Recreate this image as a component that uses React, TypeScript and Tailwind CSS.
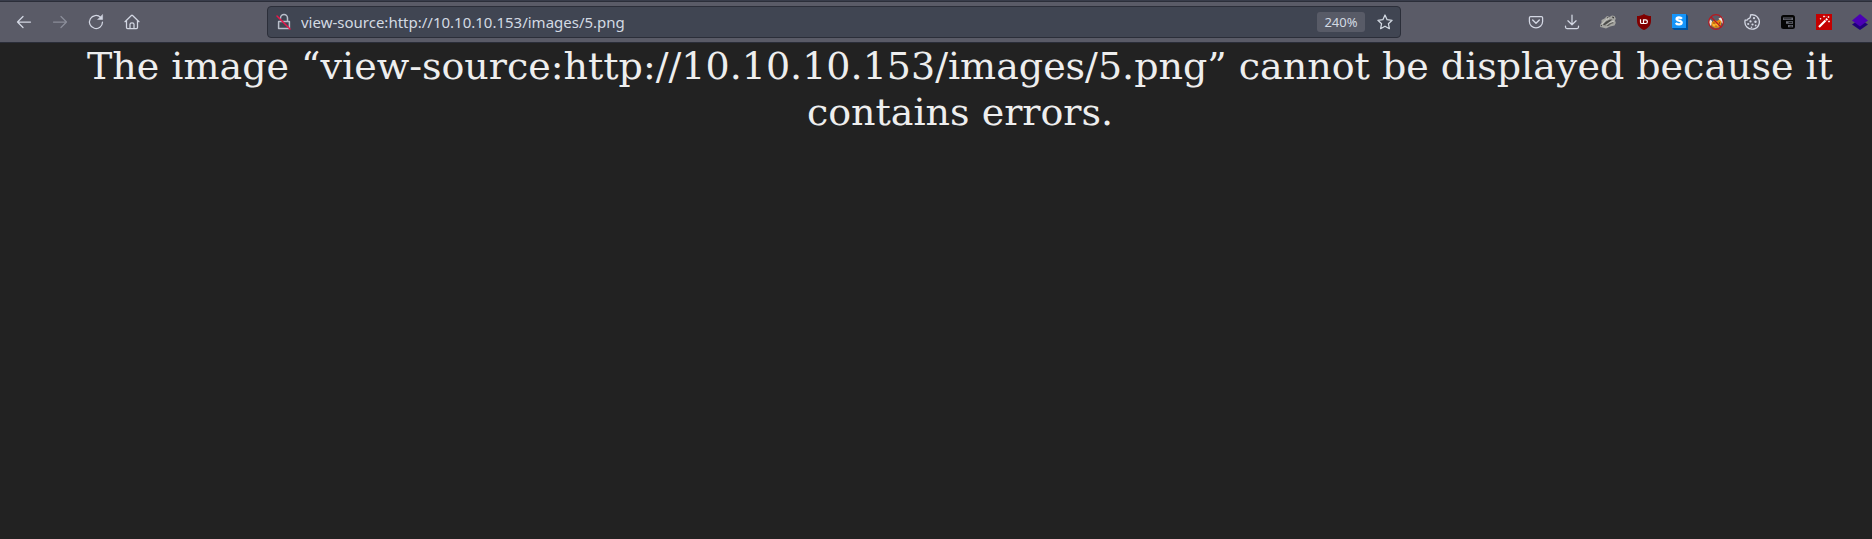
import type { ReactNode } from 'react';

function ToolButton({ label, disabled, children }: { label: string; disabled?: boolean; children: ReactNode }) {
  return (
    <button type="button" aria-label={label} disabled={disabled} className="flex size-4 shrink-0 items-center justify-center text-[#d3d7e3] disabled:opacity-40">
      {children}
    </button>
  );
}

function Line({ children }: { children: ReactNode }) {
  return (
    <svg viewBox="0 0 16 16" className="size-4 shrink-0 overflow-visible" fill="none" stroke="currentColor" strokeWidth="1.25" strokeLinecap="round" strokeLinejoin="round" aria-hidden="true">
      {children}
    </svg>
  );
}

function Navigation() {
  return (
    <nav aria-label="Navigation" className="flex gap-5">
      <ToolButton label="Back">
        <Line><path d="M14.5 8H1.5M7 2.500L1.500 8L7 13.500" /></Line>
      </ToolButton>
      <ToolButton label="Forward" disabled>
        <Line><path d="M1.500 8H14.500M9 2.500L14.500 8L9 13.500" /></Line>
      </ToolButton>
      <ToolButton label="Reload">
        <Line>
          <path d="M12.600 3.400A6.500 6.500 0 1 0 14.500 8" />
          <path d="M14.600 0.800V5.500H9.900Z" fill="currentColor" strokeWidth="0.5" />
        </Line>
      </ToolButton>
      <ToolButton label="Home">
        <Line>
          <path d="M1 7.700L7.400 1.500Q8 1 8.600 1.500L15 7.700M2.500 6.600V13.500Q2.500 14.600 3.600 14.600H12.400Q13.500 14.600 13.500 13.500V6.600" />
          <path d="M6 14.400V10.300Q6 8.800 8 8.800T10 10.300V14.400" />
        </Line>
      </ToolButton>
    </nav>
  );
}

function AddressBar() {
  return (
    <div className="mr-[127px] ml-[127px] flex h-8 min-w-0 flex-1 items-center rounded border border-[#2b2e39] bg-[#404552] pr-[7px] pl-2 text-[#d3dae3]">
      <button type="button" aria-label="Connection is not secure" className="shrink-0 text-[#b9bfcb]">
        <Line>
          <path d="M4.500 4.500V4A3.500 3.500 0 0 1 11.500 4V7.500M2.600 7.500H13.400V14.500H2.600Z" strokeWidth="1.5" />
          <path d="M1 2L14 15" stroke="#e8174b" strokeWidth="1.500" />
        </Line>
      </button>
      <input aria-label="Address" defaultValue="view-source:http://10.10.10.153/images/5.png" className="ml-[9px] min-w-0 flex-1 bg-transparent font-['Noto_Sans',sans-serif] text-[15px] leading-5 outline-none" />
      <button type="button" aria-label="Reset zoom level" className="h-5 w-12 shrink-0 rounded-[3px] bg-[#585b67] text-center font-['Noto_Sans',sans-serif] text-[13px] leading-5 text-[#d3dae3]">240%</button>
      <button type="button" aria-label="Bookmark this page" className="ml-3 shrink-0">
        <Line><path d="M8 1L10.100 5.700L15.100 6.300L11.400 9.700L12.400 14.700L8 12.200L3.600 14.700L4.600 9.700L0.900 6.300L5.900 5.700Z" /></Line>
      </button>
    </div>
  );
}

function Extensions() {
  return (
    <div className="flex gap-5">
      <ToolButton label="Save to Pocket">
        <Line>
          <path d="M2.600 2.500H13.400Q14.600 2.500 14.600 3.700V7.600A6.600 6.300 0 0 1 1.400 7.600V3.700Q1.400 2.500 2.600 2.500Z" />
          <path d="M4.700 6L8 9.200L11.300 6" strokeWidth="1.400" />
        </Line>
      </ToolButton>
      <ToolButton label="Downloads">
        <Line><path d="M8 1V10.500M3.900 6.800L8 10.800L12.100 6.800M1.500 12V13Q1.500 14.500 3 14.500H13Q14.500 14.500 14.500 13V12" /></Line>
      </ToolButton>
      <ToolButton label="Privacy Badger">
        <svg viewBox="0 0 16 16" className="size-4" aria-hidden="true">
          <path d="M0 11L1.500 8.500L1.500 6L4.500 4.500L7 2L9.500 3L12 1.500L14.500 2L15.800 4.500L15 6.500L15.800 9L14.500 11.500L10 12.500L6 14.500L2.500 13.500L0.300 13Z" fill="#a5a5a1" />
          <path d="M3 10.500L6 7.500L10 5.500L12.500 5.500L10 7.500L6.500 10L4 11.500Z" fill="#4b4b49" />
          <path d="M5 12L8 9.500L12.500 8L14 9L11 10L8.500 12Z" fill="#656561" />
          <path d="M2 10L6 5.500L9 4.500M6 11.500L10 8.500L14 7" stroke="#d8d8d2" strokeWidth="0.700" fill="none" />
          <path d="M12 2.500L14 3V4.500L12.500 4ZM0.500 11H2L1.500 12.500ZM7 3L8.500 3.500L7.500 4.500Z" fill="#3b3b3b" />
        </svg>
      </ToolButton>
      <ToolButton label="uBlock Origin">
        <svg viewBox="0 0 16 16" className="size-4" aria-hidden="true">
          <path d="M8 0C6 1.500 3.500 2 1 2V7C1 12 4.500 14.500 8 16C11.500 14.500 15 12 15 7V2C12.500 2 10 1.500 8 0Z" fill="#800000" />
          <path d="M4.500 5.300V8.200Q4.500 9.500 5.800 9.500H7.500V5.300M7.500 5.900H9.600A1.800 1.800 0 0 1 9.600 9.500H7.500" fill="none" stroke="#fff" strokeWidth="1.200" />
        </svg>
      </ToolButton>
      <ToolButton label="Stylus">
        <svg viewBox="0 0 16 16" className="size-4 overflow-visible" aria-hidden="true">
          <path d="M0 14L2 16H16V2L14 0Z" fill="#00519d" />
          <path d="M0 0H14V14H0Z" fill="#1595fa" />
          <path d="M9.900 4.700C8.700 3.100 4.600 3 4.600 5.100C4.600 7.200 9.700 5.900 9.700 8.500C9.700 10.900 5.200 10.900 3.800 9" fill="none" stroke="#fff" strokeWidth="2.300" />
        </svg>
      </ToolButton>
      <ToolButton label="FoxyProxy">
        <svg viewBox="0 0 16 16" className="size-4" aria-hidden="true">
          <circle cx="8" cy="8" r="7" fill="#5a5b67" />
          <path d="M1.500 5L4 7L4 10L2.500 12L1 9ZM10.500 4.500L14 3L15 6V10L12 7Z" fill="#eee8df" />
          <path d="M6.500 6L9 7L11.500 5.500L13.500 7.500L13 11L11 13.500L7 14L3.500 12L3.500 8.500Z" fill="#e98a12" />
          <path d="M4.500 9.500L7 10.500L9.500 9.500L11 11L8 12.500L5 12Z" fill="#ffb52e" />
          <path d="M5.500 9H6.500M11 9H12M7.500 12H8.500" stroke="#4b2b10" />
          <circle cx="8" cy="8" r="7.300" fill="none" stroke="#b81820" strokeWidth="1.200" />
          <path d="M3 3L13 13" stroke="#b81820" strokeWidth="1.300" />
        </svg>
      </ToolButton>
      <ToolButton label="Cookie editor">
        <svg viewBox="0 0 16 16" className="size-4" fill="none" stroke="currentColor" strokeWidth="1.300" strokeLinejoin="round" aria-hidden="true">
          <path d="M6.500 0.900C9 0.500 12 1.200 13.500 3.200A7.200 7.200 0 1 1 1.200 6C2.500 6.500 3.700 6 4 4.800C5.800 4.500 6.800 3 6.500 0.900Z" />
          <g fill="currentColor" stroke="none">
            <circle cx="10" cy="4.200" r="1.100" /><circle cx="6.500" cy="7.400" r="1.100" /><circle cx="11.500" cy="7.800" r="1.200" />
            <circle cx="4.200" cy="10" r="1.100" /><circle cx="8.500" cy="10.500" r="1.100" /><circle cx="11.700" cy="11.500" r="0.900" /><circle cx="7.500" cy="13.200" r="0.800" />
          </g>
        </svg>
      </ToolButton>
      <ToolButton label="Request tools">
        <svg viewBox="0 0 16 16" className="size-4" aria-hidden="true">
          <rect x="1" y="1" width="14" height="14" rx="2.500" fill="#050505" />
          <path d="M3 3.500H13V6H3ZM6 7.200H13V9.700H6ZM8 11H13V13.300H8Z" fill="#6b6d78" />
          <path d="M3.700 4.400H11.500V5.200H3.700ZM8.500 8H12.300V8.800H8.500ZM9.500 11.800H12.300V12.500H9.500Z" fill="#050505" />
        </svg>
      </ToolButton>
      <ToolButton label="Magic wand">
        <svg viewBox="0 0 16 16" className="size-4" aria-hidden="true">
          <path d="M0 0H16V16H0Z" fill="#c40000" />
          <path d="M3 13L9.500 6.500" stroke="#fff" strokeWidth="2.200" />
          <path d="M10 6L11.300 4.700" stroke="#fff" strokeWidth="2" />
          <path d="M8 1.500V3.500M7 2.500H9M12.500 2V4M11.500 3H13.500M13 6.500V8.500M12 7.500H14M4.500 4V5.500M3.800 4.700H5.300M10 2.500L10.500 3" stroke="#fff" strokeWidth="0.700" />
        </svg>
      </ToolButton>
      <ToolButton label="Layers">
        <svg viewBox="0 0 16 16" className="size-4" aria-hidden="true">
          <path d="M0 10.500L8 5L16 10.500L8 16Z" fill="#20007a" />
          <path d="M0 6.500L8 0L16 6.500L8 12.500Z" fill="#4b00b5" />
        </svg>
      </ToolButton>
    </div>
  );
}

export default function App() {
  return (
    <div className="min-h-screen bg-[#222222]">
      <header className="border-t border-[#383c4a]">
        <div className="flex h-[42px] items-center border-y border-[#2b2e39] bg-[#5a5b67] pr-1 pl-4">
          <Navigation />
          <AddressBar />
          <Extensions />
        </div>
      </header>
      <main className="pl-12 text-center font-['DejaVu_Serif',serif] text-[38px] leading-[46px] text-[#eeeeee]">
        <p>The image “view-source:http://10.10.10.153/images/5.png” cannot be displayed because it contains errors.</p>
      </main>
    </div>
  );
}
